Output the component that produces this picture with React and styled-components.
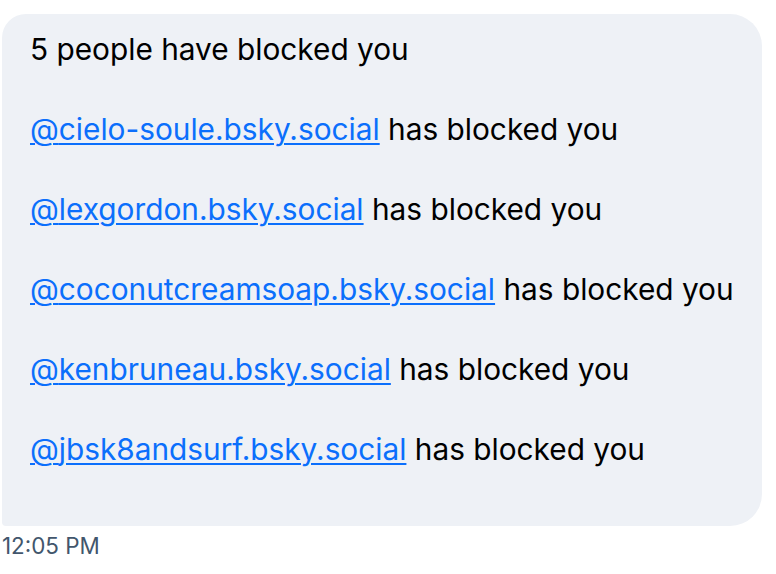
import React from "react";
import styled, { createGlobalStyle } from "styled-components";

const Global = createGlobalStyle`
  html, body { margin: 0; padding: 0; background: #ffffff; }
  body { font-family: Inter, "Noto Sans", sans-serif; }
`;

const Wrap = styled.div`
  padding: 14px 0 0 2px;
  display: flex;
  flex-direction: column;
  align-items: flex-start;
`;

const Bubble = styled.div`
  background: #eef1f6;
  border-radius: 24px 32px 32px 4px;
  padding: 15px 28px 57px 28px;
  font-size: 29.8px;
  line-height: 40px;
  color: #000000;
  display: flex;
  flex-direction: column;
  gap: 40px;
`;

const Line = styled.div`
  white-space: nowrap;
`;

const Handle = styled.a`
  color: #0b6ffc;
  text-decoration: underline;
  text-decoration-thickness: 1.5px;
  text-underline-offset: 3px;
`;

const Time = styled.div`
  margin-top: 6px;
  font-size: 22.4px;
  line-height: 28px;
  color: #42566c;
`;

const handles = [
  "cielo-soule.bsky.social",
  "lexgordon.bsky.social",
  "coconutcreamsoap.bsky.social",
  "kenbruneau.bsky.social",
  "jbsk8andsurf.bsky.social",
];

export default function App() {
  return (
    <>
      <Global />
      <Wrap>
        <Bubble>
          <Line>5 people have blocked you</Line>
          {handles.map((h) => (
            <Line key={h}>
              <Handle href="#">@{h}</Handle> has blocked you
            </Line>
          ))}
        </Bubble>
        <Time>12:05 PM</Time>
      </Wrap>
    </>
  );
}
